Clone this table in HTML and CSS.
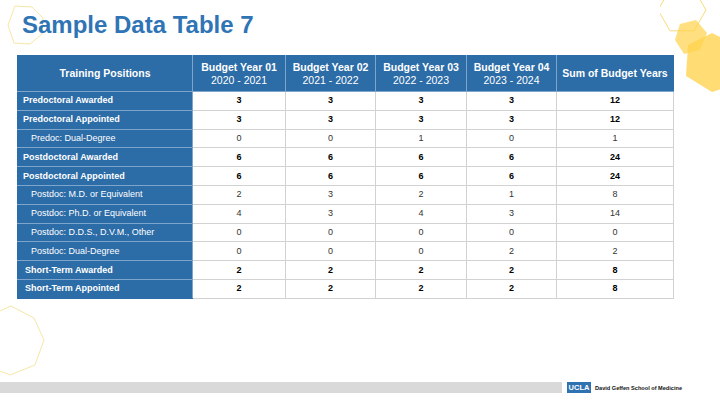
FILE: index.html
```html
<!DOCTYPE html>
<html lang="en">
<head>
<meta charset="utf-8">
<title>Sample Data Table 7</title>
<link rel="stylesheet" href="styles.css">
</head>
<body>
<div class="slide">
  <svg class="deco deco-tl" width="50" height="50" viewBox="0 0 50 50">
    <polygon points="15,6 32,7 43,18 42,34 30,44 14,43 8,25" fill="none" stroke="#f6e7a6" stroke-width="1"/>
  </svg>
  <svg class="deco deco-tr" width="80" height="100" viewBox="0 0 80 100">
    <polygon points="46,10 34,30.8 10,30.8 -2,10 10,-10.8 34,-10.8" fill="none" stroke="#f8dc7a" stroke-width="1"/>
    <polygon points="47,33 40,50 24,54 15,40 20,24 36,20" fill="#ffd34d" opacity="0.72"/>
    <polygon points="86,50 78,84 52,92 26,76 28,45 52,33" fill="#ffd34d" opacity="0.78"/>
  </svg>
  <svg class="deco deco-bl" width="50" height="80" viewBox="0 0 50 80">
    <polygon points="11,1 34,13 44,35 35,60 10,70 -15,60 -20,15" fill="none" stroke="#f6e7a6" stroke-width="1"/>
  </svg>

  <h1 class="title">Sample Data Table 7</h1>

  <table class="data">
    <colgroup>
      <col class="c-label"><col class="c-y1"><col class="c-y2"><col class="c-y3"><col class="c-y4"><col class="c-sum">
    </colgroup>
    <thead>
      <tr>
        <th>Training Positions</th>
        <th>Budget Year 01<br><span class="yr">2020 - 2021</span></th>
        <th>Budget Year 02<br><span class="yr">2021 - 2022</span></th>
        <th>Budget Year 03<br><span class="yr">2022 - 2023</span></th>
        <th>Budget Year 04<br><span class="yr">2023 - 2024</span></th>
        <th>Sum of Budget Years</th>
      </tr>
    </thead>
    <tbody>
      <tr class="total"><td class="lbl">Predoctoral Awarded</td><td>3</td><td>3</td><td>3</td><td>3</td><td>12</td></tr>
      <tr class="total"><td class="lbl">Predoctoral Appointed</td><td>3</td><td>3</td><td>3</td><td>3</td><td>12</td></tr>
      <tr class="sub"><td class="lbl">Predoc: Dual-Degree</td><td>0</td><td>0</td><td>1</td><td>0</td><td>1</td></tr>
      <tr class="total"><td class="lbl">Postdoctoral Awarded</td><td>6</td><td>6</td><td>6</td><td>6</td><td>24</td></tr>
      <tr class="total"><td class="lbl">Postdoctoral Appointed</td><td>6</td><td>6</td><td>6</td><td>6</td><td>24</td></tr>
      <tr class="sub"><td class="lbl">Postdoc: M.D. or Equivalent</td><td>2</td><td>3</td><td>2</td><td>1</td><td>8</td></tr>
      <tr class="sub"><td class="lbl">Postdoc: Ph.D. or Equivalent</td><td>4</td><td>3</td><td>4</td><td>3</td><td>14</td></tr>
      <tr class="sub"><td class="lbl">Postdoc: D.D.S., D.V.M., Other</td><td>0</td><td>0</td><td>0</td><td>0</td><td>0</td></tr>
      <tr class="sub"><td class="lbl">Postdoc: Dual-Degree</td><td>0</td><td>0</td><td>0</td><td>2</td><td>2</td></tr>
      <tr class="total short"><td class="lbl">Short-Term Awarded</td><td>2</td><td>2</td><td>2</td><td>2</td><td>8</td></tr>
      <tr class="total short"><td class="lbl">Short-Term Appointed</td><td>2</td><td>2</td><td>2</td><td>2</td><td>8</td></tr>
    </tbody>
  </table>

  <footer class="footer">
    <div class="bar"></div>
    <div class="logo">
      <span class="ucla">UCLA</span>
      <span class="school">David Geffen School of Medicine</span>
    </div>
  </footer>
</div>
</body>
</html>
```

FILE: styles.css
```css
* { box-sizing: border-box; }
html, body { margin: 0; padding: 0; background: #fff; }
body { font-family: "Liberation Sans", Arial, sans-serif; }

.slide {
  position: relative;
  width: 720px;
  height: 405px;
  overflow: hidden;
  display: flex;
  flex-direction: column;
}

.deco { position: absolute; }
.deco-tl { left: 0; top: 0; }
.deco-tr { left: 660px; top: 0; }
.deco-bl { left: 0; top: 305px; }

.title {
  position: relative;
  margin: 13px 0 0 22px;
  font-size: 24px;
  line-height: 24px;
  font-weight: bold;
  color: #2f74b5;
}

.data {
  position: relative;
  margin: 18px 0 0 17px;
  width: 656px;
  table-layout: fixed;
  border-collapse: collapse;
  font-size: 9px;
}
.c-label { width: 175px; }
.c-y1 { width: 93px; }
.c-y2 { width: 90px; }
.c-y3 { width: 91px; }
.c-y4 { width: 90px; }
.c-sum { width: 117px; }

.data th {
  background: #2c6ca7;
  color: #fff;
  font-weight: bold;
  font-size: 10.5px;
  line-height: 13px;
  height: 36px;
  padding: 0;
  text-align: center;
  vertical-align: middle;
  border: 1px solid #7ea6cd;
  border-top-color: #2c6ca7;
}
.data th:first-child { border-left-color: #2c6ca7; }
.data th:last-child { border-right-color: #2c6ca7; }
.data th .yr { font-weight: normal; }

.data td {
  height: 18.8px;
  padding: 0;
  text-align: center;
  vertical-align: middle;
  border: 1px solid #d2d2d2;
  color: #333;
  line-height: 11px;
}
.data tr.total td { color: #000; font-weight: bold; }

.data tr td.lbl {
  background: #2c6ca7;
  color: #fff;
  text-align: left;
  padding-left: 5px;
  border-color: #7ea6cd;
  border-left-color: #2c6ca7;
}
.data tr.sub td.lbl { padding-left: 13px; font-weight: normal; }
.data tr.short td.lbl { padding-left: 7px; }
.data tbody tr:last-child td.lbl { border-bottom-color: #2c6ca7; }

.footer {
  margin-top: auto;
  margin-bottom: 12px;
  display: flex;
  align-items: center;
  gap: 5px;
}
.bar {
  width: 562px;
  height: 11px;
  background: #d9d9d9;
}
.logo {
  display: flex;
  align-items: center;
  gap: 4px;
}
.ucla {
  display: flex;
  align-items: center;
  justify-content: center;
  width: 24px;
  height: 11px;
  background: #2f72b2;
  color: #fff;
  font-weight: bold;
  font-size: 7.5px;
}
.school {
  font-size: 5.6px;
  font-weight: bold;
  color: #111;
  white-space: nowrap;
}
```
